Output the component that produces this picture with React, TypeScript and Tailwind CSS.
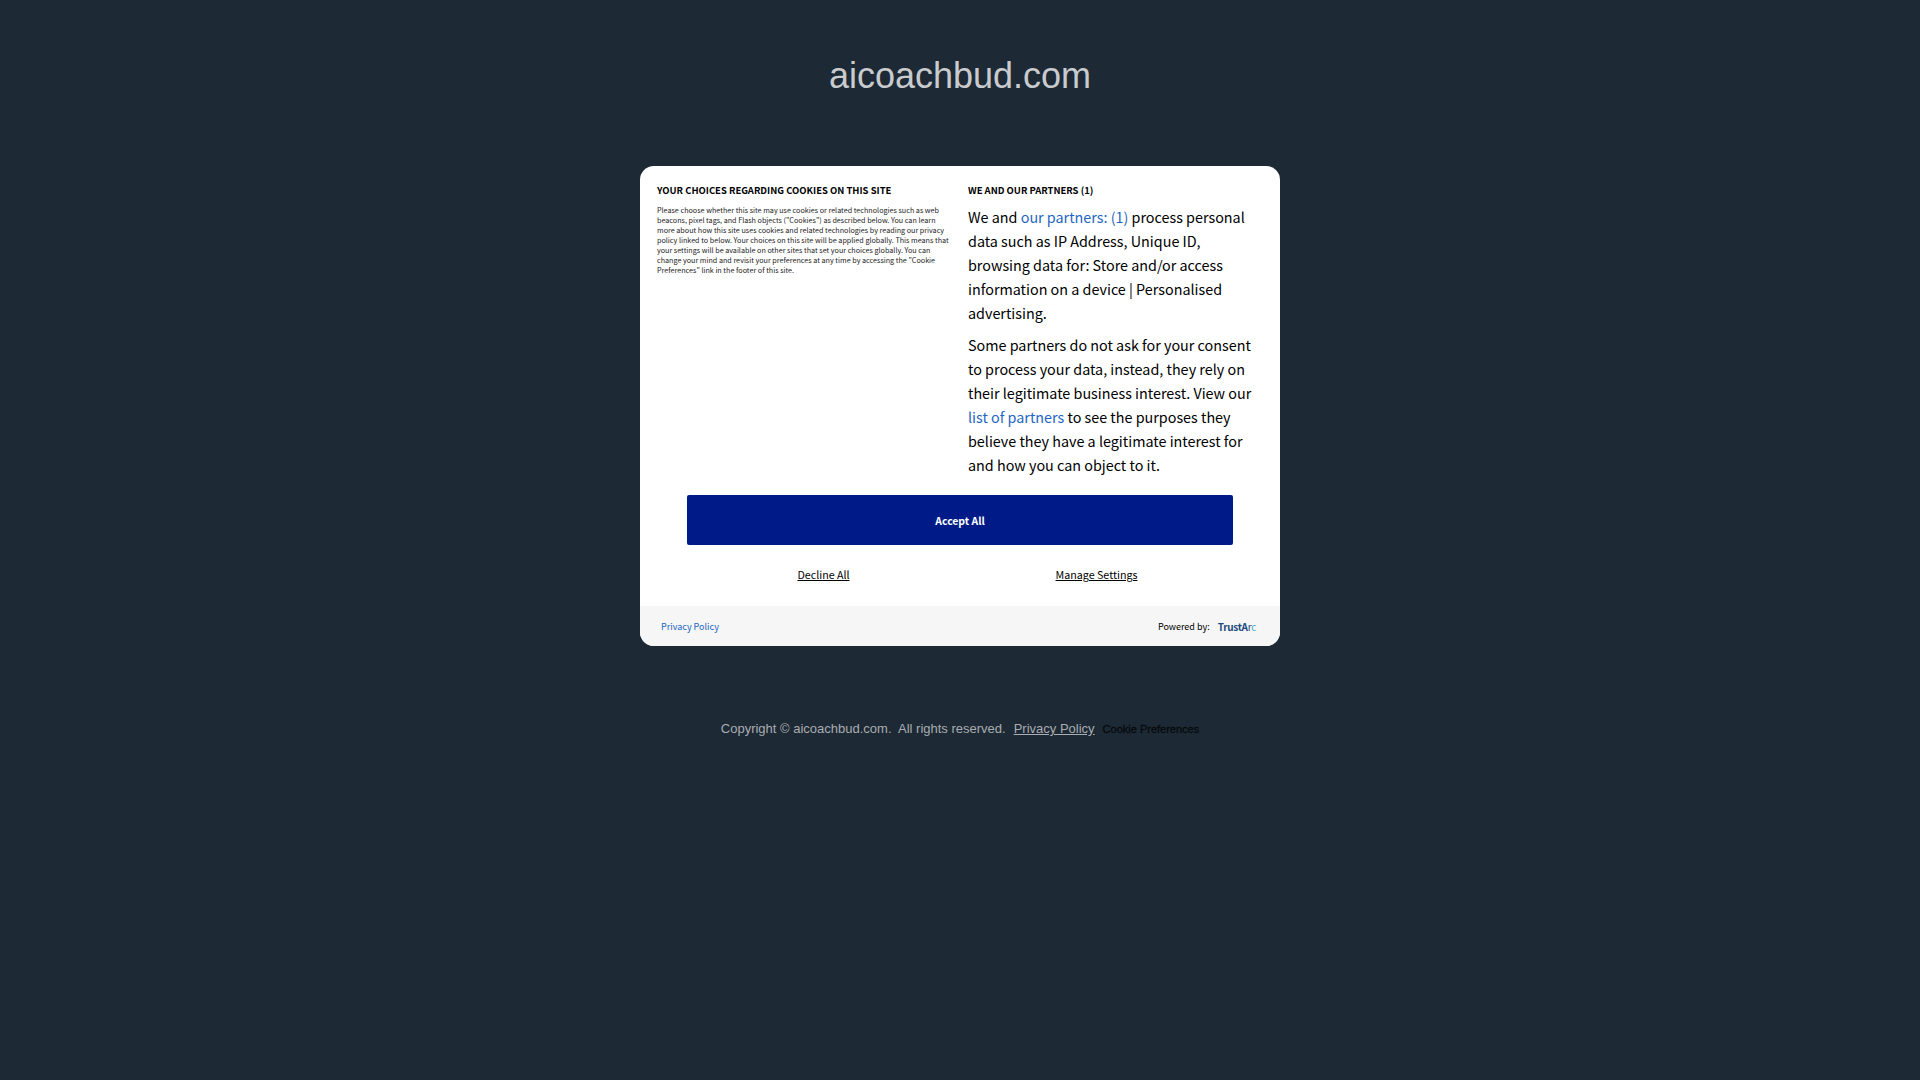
const font = "font-['Noto_Sans_CJK_SC','Noto_Sans',sans-serif]";

export default function App() {
  return (
    <div className="min-h-[1080px] bg-[#1d2935] flex flex-col items-center font-['Liberation_Sans',Arial,sans-serif]">
      <h1 className="mt-[54px] h-[44px] text-[36px] leading-[44px] font-normal text-[#c9cbce]">aicoachbud.com</h1>

      <div className={`mt-[68px] w-[640px] h-[480px] bg-white rounded-[14px] overflow-hidden flex flex-col text-black ${font}`}>
        <div className="flex pt-[16px] pl-[17px] h-[313px]">
          <div className="w-[311px] pr-[18px]">
            <h2 className="text-[9.45px] leading-[16px] font-bold">YOUR CHOICES REGARDING COOKIES ON THIS SITE</h2>
            <p className="mt-[7px] text-[7.2px] leading-[10px] text-[#222]">
              Please choose whether this site may use cookies or related technologies such as web beacons, pixel tags, and Flash objects ("Cookies") as described below. You can learn more about how this site uses cookies and related technologies by reading our privacy policy linked to below. Your choices on this site will be applied globally. This means that your settings will be available on other sites that set your choices globally. You can change your mind and revisit your preferences at any time by accessing the "Cookie Preferences" link in the footer of this site.
            </p>
          </div>
          <div className="w-[296px]">
            <h2 className="text-[9.45px] leading-[16px] font-bold">WE AND OUR PARTNERS (1)</h2>
            <p className="mt-[7px] text-[14.35px] leading-[24px]">
              We and <a className="text-[#1f66c1]">our partners: (1)</a> process personal data such as IP Address, Unique ID, browsing data for: Store and/or access information on a device | Personalised advertising.
            </p>
            <p className="mt-[8px] text-[14.35px] leading-[24px]">
              Some partners do not ask for your consent to process your data, instead, they rely on their legitimate business interest. View our <a className="text-[#1f66c1]">list of partners</a> to see the purposes they believe they have a legitimate interest for and how you can object to it.
            </p>
          </div>
        </div>

        <div className="px-[47px] pt-[16px]">
          <button className="w-[546px] h-[50px] pt-[1px] rounded-[2px] bg-[#001b88] text-white text-[10.4px] font-bold">Accept All</button>
        </div>

        <div className="flex mt-[21px] px-[47px] text-[10.7px] leading-[18px]">
          <a className="w-[273px] text-center"><span className="underline">Decline All</span></a>
          <a className="w-[273px] text-center"><span className="underline">Manage Settings</span></a>
        </div>

        <div className="mt-auto h-[40px] pt-[1px] bg-[#f6f6f6] flex items-center justify-between pl-[21px] pr-[24px]">
          <a className="text-[9px] text-[#1f66c1]">Privacy Policy</a>
          <div className="flex items-center gap-[8px]">
            <span className="text-[9px]">Powered by:</span>
            <span className="text-[10px] font-bold tracking-[-0.3px] text-[#1d4a7c]">TrustA<span className="font-normal">r</span><span className="font-normal text-[#3fa9c9]">c</span></span>
          </div>
        </div>
      </div>

      <div className="mt-[74px] flex items-center text-[13px] leading-[18px] text-[#a9adb1]">
        <span className="whitespace-pre">Copyright © aicoachbud.com.  All rights reserved.</span>
        <a className="ml-[8px] underline">Privacy Policy</a>
        <a className="ml-[8px] text-[11px] text-[#05090d] [-webkit-text-stroke:0.3px_#05090d]">Cookie Preferences</a>
      </div>
    </div>
  );
}
